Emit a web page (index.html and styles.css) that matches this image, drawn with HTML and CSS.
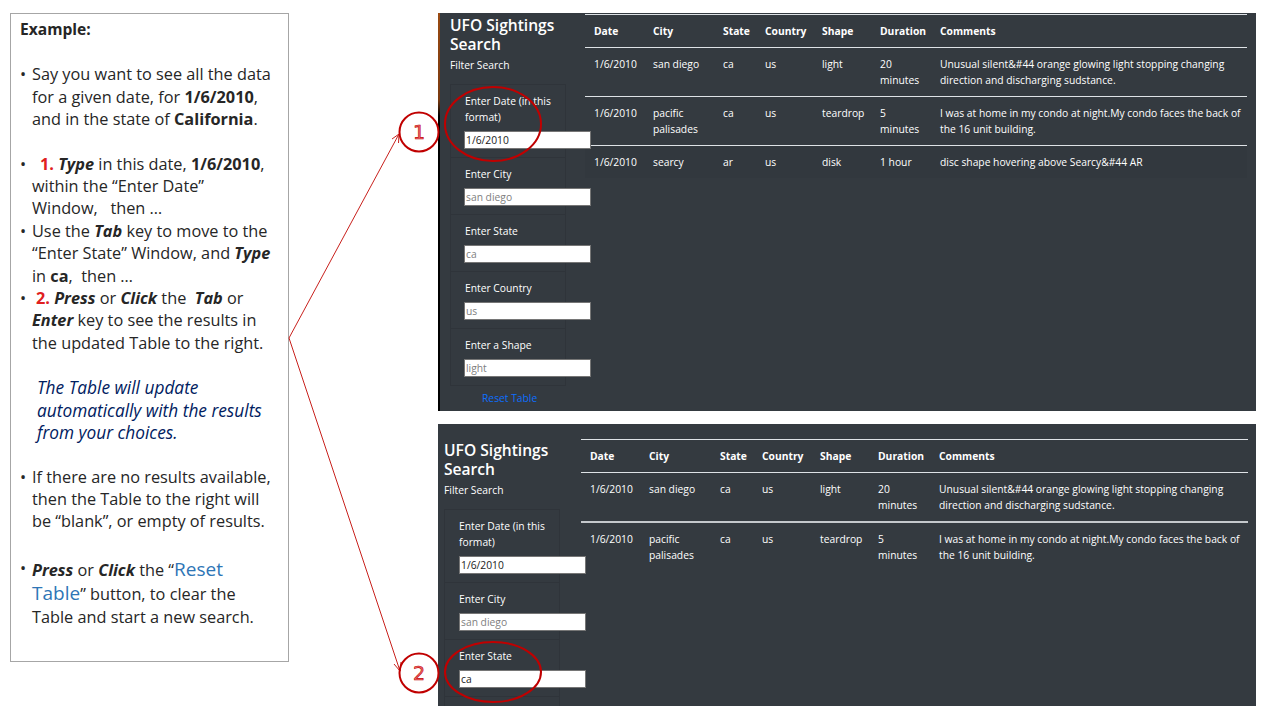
FILE: index.html
```html
<!DOCTYPE html>
<html>
<head>
    <title>UFO Sightings Search - Example</title>
    <link rel="stylesheet" href="styles.css">
</head>
<body>
<div class="slide">
    <div class="note">
        <p class="note-title">Example:</p>
        <ul class="steps gap-big">
            <li>Say you want to see all the data for a given date, for <b>1/6/2010</b>, and in the state of <b>California</b>.</li>
        </ul>
        <ul class="steps gap-line">
            <li><span class="num num-one">1.</span> <b><i>Type</i></b> in this date, <b>1/6/2010</b>, within the “Enter Date”<br>Window, &nbsp;&nbsp;then …</li>
            <li>Use the <b><i>Tab</i></b> key to move to the “Enter State” Window, and <b><i>Type</i></b> in <b>ca</b>, &nbsp;then …</li>
            <li><span class="num num-two">2.</span> <b><i>Press</i></b> or <b><i>Click</i></b> the &nbsp;<b><i>Tab</i></b> or <b><i>Enter</i></b> key to see the results in the updated Table to the right.</li>
        </ul>
        <p class="note-aside">The Table will update automatically with the results from your choices.</p>
        <ul class="steps gap-blank">
            <li>If there are no results available, then the Table to the right will<br>be “blank”, or empty of results.</li>
        </ul>
        <ul class="steps gap-reset">
            <li><b><i>Press</i></b> or <b><i>Click</i></b> the “<span class="reset-word">Reset Table</span>” button, to clear the<br>Table and start a new search.</li>
        </ul>
    </div>

    <div class="panel panel-top">
        <div class="sidebar">
            <h2>UFO Sightings Search</h2>
            <p class="sub">Filter Search</p>
            <div class="filter"><label>Enter Date (in this format)</label><input type="text" value="1/6/2010"></div>
            <div class="filter"><label>Enter City</label><input type="text" placeholder="san diego"></div>
            <div class="filter"><label>Enter State</label><input type="text" placeholder="ca"></div>
            <div class="filter"><label>Enter Country</label><input type="text" placeholder="us"></div>
            <div class="filter"><label>Enter a Shape</label><input type="text" placeholder="light"></div>
            <a class="reset" href="#">Reset Table</a>
        </div>
        <table class="results">
            <thead>
                <tr><th class="c-date">Date</th><th class="c-city">City</th><th class="c-state">State</th><th class="c-country">Country</th><th class="c-shape">Shape</th><th class="c-dur">Duration</th><th>Comments</th></tr>
            </thead>
            <tbody>
                <tr><td>1/6/2010</td><td>san diego</td><td>ca</td><td>us</td><td>light</td><td>20 minutes</td><td>Unusual silent&amp;#44 orange glowing light stopping changing direction and discharging sudstance.</td></tr>
                <tr><td>1/6/2010</td><td>pacific palisades</td><td>ca</td><td>us</td><td>teardrop</td><td>5 minutes</td><td>I was at home in my condo at night.My condo faces the back of the 16 unit building.</td></tr>
                <tr class="odd"><td>1/6/2010</td><td>searcy</td><td>ar</td><td>us</td><td>disk</td><td>1 hour</td><td>disc shape hovering above Searcy&amp;#44 AR</td></tr>
            </tbody>
        </table>
    </div>

    <div class="panel panel-bottom">
        <div class="sidebar">
            <h2>UFO Sightings Search</h2>
            <p class="sub">Filter Search</p>
            <div class="filter"><label>Enter Date (in this format)</label><input type="text" value="1/6/2010"></div>
            <div class="filter"><label>Enter City</label><input type="text" placeholder="san diego"></div>
            <div class="filter"><label>Enter State</label><input type="text" value="ca"></div>
            <div class="filter filter-cut"></div>
        </div>
        <table class="results">
            <thead>
                <tr><th class="c-date">Date</th><th class="c-city">City</th><th class="c-state">State</th><th class="c-country">Country</th><th class="c-shape">Shape</th><th class="c-dur">Duration</th><th>Comments</th></tr>
            </thead>
            <tbody>
                <tr><td>1/6/2010</td><td>san diego</td><td>ca</td><td>us</td><td>light</td><td>20 minutes</td><td>Unusual silent&amp;#44 orange glowing light stopping changing direction and discharging sudstance.</td></tr>
                <tr class="thick"><td>1/6/2010</td><td>pacific palisades</td><td>ca</td><td>us</td><td>teardrop</td><td>5 minutes</td><td>I was at home in my condo at night.My condo faces the back of the 16 unit building.</td></tr>
            </tbody>
        </table>
    </div>

    <svg class="marks" width="1261" height="712" viewBox="0 0 1261 712">
        <g fill="none" stroke="#c8201c">
            <path d="M289 338 L399 134 M392 139 L399 134 L398.500 143"/>
            <path d="M289 338 L400 671 M394 664 L400 671 L401 662"/>
        </g>
        <g fill="none" stroke="#c00000" stroke-width="2">
            <circle cx="419" cy="132" r="19.500"/>
            <circle cx="419" cy="673" r="19.500"/>
            <ellipse cx="493" cy="124" rx="48" ry="37"/>
            <ellipse cx="493" cy="672" rx="48" ry="30"/>
        </g>
        <text class="mark-num" x="419" y="139">1</text>
        <text class="mark-num" x="419" y="680">2</text>
    </svg>
</div>
</body>
</html>
```

FILE: styles.css
```css
body {
    margin: 0;
    background: #fff;
    font-family: "Open Sans", "Liberation Sans", sans-serif;
}
.slide {
    position: relative;
    width: 1261px;
    height: 712px;
    overflow: hidden;
}

/* left note box */
.note {
    position: absolute;
    left: 10px;
    top: 13px;
    width: 279px;
    height: 649px;
    box-sizing: border-box;
    border: 1px solid #a6a6a6;
    padding: 4px 9px 0 9px;
    color: #262626;
    font-size: 16.300px;
    line-height: 22.400px;
}
.note p, .steps {
    margin: 0;
    padding: 0;
}
.note-title {
    font-weight: 700;
    font-size: 15.600px;
}
.steps {
    list-style: none;
}
.steps li {
    position: relative;
    padding-left: 12px;
}
.steps li::before {
    content: "•";
    position: absolute;
    left: 0;
}
.gap-big { margin-top: 23px !important; }
.gap-line { margin-top: 22px !important; }
.gap-blank { margin-top: 21px !important; }
.gap-reset { margin-top: 24px !important; }
.num {
    color: #e02020;
    font-weight: 700;
}
.num-one { margin-left: 8px; }
.num-two { margin-left: 4px; }
.note-aside {
    margin: 23px 0 0 17px !important;
    color: #002060;
    font-style: italic;
    font-size: 17.300px;
}
.reset-word {
    color: #2e75b6;
    font-size: 19px;
    line-height: 24px;
}

/* screenshots of the search page */
.panel {
    position: absolute;
    display: flex;
    background: #343a40;
    color: #fff;
    overflow: hidden;
    font-size: 10.300px;
    line-height: 16px;
}
.panel-top {
    left: 438px;
    top: 13px;
    width: 818px;
    height: 398px;
    box-sizing: border-box;
    border-left: 2px solid;
    border-image: linear-gradient(#9a4a12 0, #7a3a10 22%, #000 26%) 1;
}
.panel-bottom {
    left: 438px;
    top: 424px;
    width: 818px;
    height: 282px;
}
.sidebar {
    flex: none;
    box-sizing: border-box;
}
.panel-top .sidebar {
    width: 145px;
    padding: 3px 0 0 10px;
}
.panel-bottom .sidebar {
    width: 143px;
    padding: 17px 0 0 6px;
}
.sidebar h2 {
    margin: 0 0 3px;
    font-size: 15.600px;
    line-height: 19px;
    font-weight: 600;
    width: 125px;
}
.sub {
    margin: 0 0 12px;
}
.filter {
    width: 116px;
    box-sizing: border-box;
    border: 1px solid #2f343a;
    margin-top: -1px;
    padding: 8px 0 8px 13px;
}
.panel-bottom .filter {
    padding-left: 14px;
}
.filter-cut {
    height: 40px;
}
.filter label {
    display: block;
    margin: 0 0 6px 1px;
    width: 96px;
}
.panel-bottom .filter label {
    margin-left: 0;
}
.filter input {
    display: block;
    box-sizing: border-box;
    width: 127px;
    height: 18px;
    margin: 0;
    padding: 0 1px;
    border: 1px solid #767676;
    background: #fff;
    color: #222;
    font: 10.300px "Open Sans", sans-serif;
    position: relative;
}
.filter input::placeholder {
    color: #808080;
}
.reset {
    display: block;
    margin: 4px 0 0 32px;
    color: #0d6efd;
    text-decoration: none;
}

/* results table */
.results {
    border-collapse: collapse;
    table-layout: fixed;
    align-self: flex-start;
}
.panel-top .results {
    width: 662px;
    margin-top: 1px;
}
.panel-bottom .results {
    width: 667px;
    margin-top: 15px;
}
.results th, .results td {
    border-top: 1px solid #dee2e6;
    padding: 8px 9px;
    text-align: left;
    vertical-align: top;
}
.results td:last-child {
    padding-right: 4px;
}
.results th {
    font-weight: 700;
}
.c-date { width: 41px; }
.c-city { width: 52px; }
.c-state { width: 24px; }
.c-country { width: 39px; }
.c-shape { width: 40px; }
.c-dur { width: 42px; }
.panel-bottom .c-city { width: 53px; }
.panel-bottom .c-country { width: 40px; }
.panel-bottom .c-dur { width: 43px; }
.odd td {
    background: #32383e;
}
.thick td {
    border-top: 2px solid #c4c8cc;
}

/* red marks on top of everything */
.marks {
    position: absolute;
    left: 0;
    top: 0;
    pointer-events: none;
}
.mark-num {
    fill: #ee6a6a;
    stroke: #c00000;
    stroke-width: 0.600;
    font-size: 19px;
    font-family: "DejaVu Sans", sans-serif;
    text-anchor: middle;
}
```
